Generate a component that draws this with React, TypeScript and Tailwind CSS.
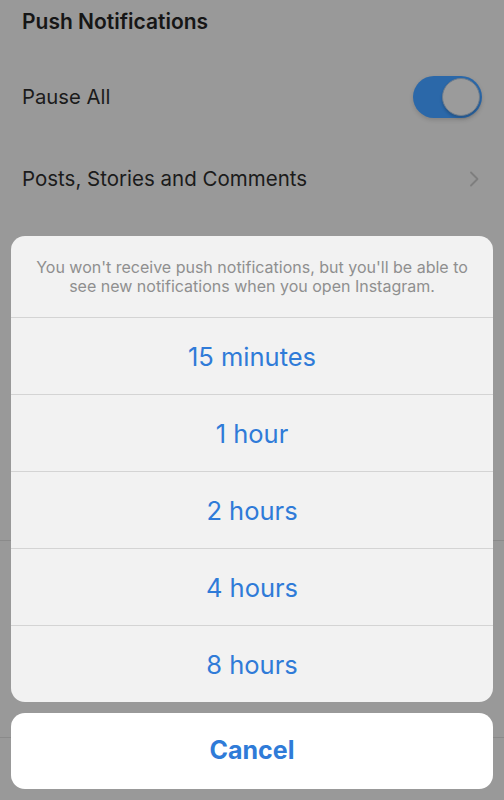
import React from 'react'

const options = ['15 minutes', '1 hour', '2 hours', '4 hours', '8 hours']

function Toggle() {
  return (
    <div className="relative h-[42px] w-[69px] rounded-full bg-[#2b68a9] shadow-[0_2px_4px_rgba(0,0,0,0.15)]">
      <div className="absolute right-[2px] top-[2px] h-[38px] w-[38px] rounded-full border border-[#6f7d8c] bg-[#9b9b9b] shadow-[0_2px_3px_rgba(0,0,0,0.2)]" />
    </div>
  )
}

function Chevron() {
  return (
    <svg width="12" height="18" viewBox="0 0 12 18" fill="none">
      <path d="M3 2.5 L9.5 9 L3 15.5" stroke="#7e7e7e" strokeWidth="1.8" strokeLinecap="round" strokeLinejoin="round" />
    </svg>
  )
}

export default function App() {
  return (
    <div className="relative h-[800px] w-full overflow-hidden bg-[#999999] font-['Inter',sans-serif]">
      {/* dimmed settings page */}
      <div className="px-[22px]">
        <div className="flex h-[44px] items-center text-[21px] font-semibold text-[#161616]">
          Push Notifications
        </div>
        <div className="flex h-[106px] items-center justify-between">
          <span className="text-[20.3px] text-[#1b1b1b]">Pause All</span>
          <Toggle />
        </div>
        <div className="flex h-[58px] items-center justify-between pr-[2px]">
          <span className="text-[20.5px] text-[#1b1b1b]">Posts, Stories and Comments</span>
          <Chevron />
        </div>
      </div>
      <div className="h-[333px] border-b border-[#8a8a8a]" />
      <div className="h-[197px] border-b border-[#8a8a8a]" />

      {/* action sheet */}
      <div className="absolute inset-x-[11px] top-[236px] flex flex-col gap-[11px]">
        <div className="overflow-hidden rounded-[14px] bg-[#f2f2f2]">
          <div className="flex h-[81px] items-center justify-center px-[22px] text-center text-[16px] leading-[19px] text-[#8f8f8f]">
            You won't receive push notifications, but you'll be able to see new notifications when you open Instagram.
          </div>
          {options.map((o) => (
            <div
              key={o}
              className="flex h-[77px] items-center justify-center border-t border-[#d4d4d4] pt-[3px] text-[25.5px] text-[#2f7bd8]"
            >
              {o}
            </div>
          ))}
        </div>
        <div className="flex h-[76px] items-center justify-center rounded-[14px] bg-white text-[25px] font-bold text-[#2f7bd8]">
          Cancel
        </div>
      </div>
    </div>
  )
}
